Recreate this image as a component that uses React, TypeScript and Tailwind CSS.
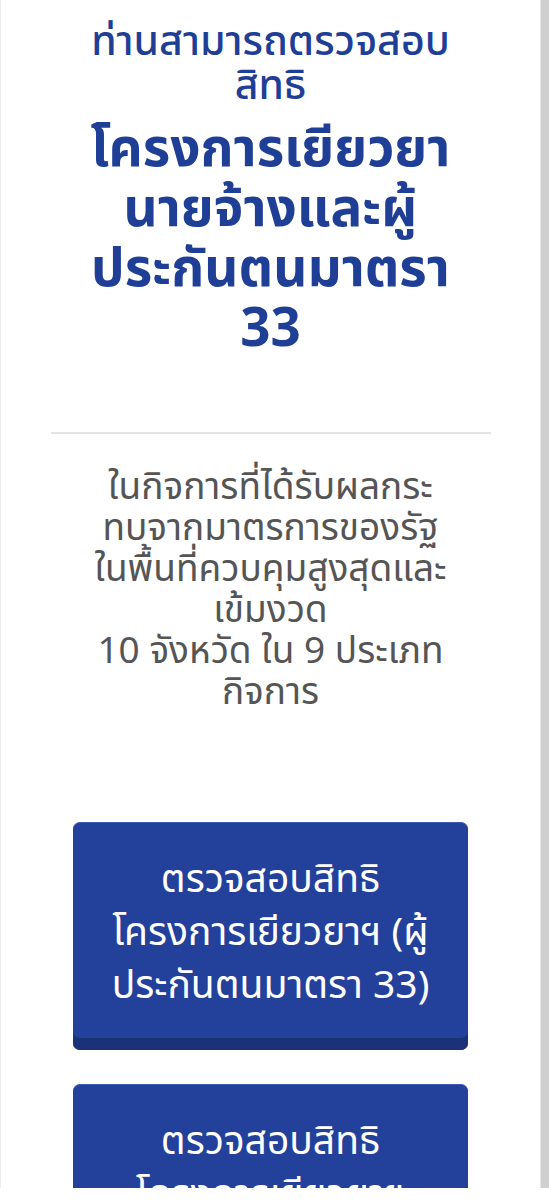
import React from 'react';

const font = { fontFamily: '"Noto Sans Thai", "Noto Sans", sans-serif' };

function CheckButton({ lines }: { lines: string[] }) {
  return (
    <button
      className="w-[395px] shrink-0 rounded-[7px] bg-[#23419a] border-t border-[#3d5cb5] pt-[31px] pb-[37px] text-white text-[39px] leading-[53px] shadow-[inset_0_-12px_0_#1b3278]"
      style={font}
    >
      {lines.map((l) => (
        <div key={l}>{l}</div>
      ))}
    </button>
  );
}

export default function App() {
  return (
    <div className="h-[1200px] w-[549px] bg-white overflow-hidden" style={font}>
      <div className="h-[1188px] flex overflow-hidden">
        <div className="w-[540px] border-l border-[#ececec] flex flex-col items-center">
          <div className="pt-[20px] text-center text-[#1f3f97]">
            <div className="text-[41px] leading-[44px] font-medium">
              <div>ท่านสามารถตรวจสอบ</div>
              <div>สิทธิ</div>
            </div>
            <div className="mt-[12px] text-[53px] leading-[60px] font-bold">
              <div>โครงการเยียวยา</div>
              <div>นายจ้างและผู้</div>
              <div>ประกันตนมาตรา</div>
              <div>33</div>
            </div>
          </div>

          <hr className="mt-[72px] w-[440px] border-0 border-t-2 border-[#e4e4e4]" />

          <div className="mt-[34px] text-center text-[#555555] text-[37px] leading-[41px]">
            <div>ในกิจการที่ได้รับผลกระ</div>
            <div>ทบจากมาตรการของรัฐ</div>
            <div>ในพื้นที่ควบคุมสูงสุดและ</div>
            <div>เข้มงวด</div>
            <div>10 จังหวัด ใน 9 ประเภท</div>
            <div>กิจการ</div>
          </div>

          <div className="mt-[108px] flex flex-col gap-[34px]">
            <CheckButton lines={['ตรวจสอบสิทธิ', 'โครงการเยียวยาฯ (ผู้', 'ประกันตนมาตรา 33)']} />
            <CheckButton lines={['ตรวจสอบสิทธิ', 'โครงการเยียวยาฯ', 'นายจ้าง']} />
          </div>
        </div>
        <div className="w-[9px] border-l border-[#e6e6e6] bg-[#cfcfcf]" />
      </div>
    </div>
  );
}
